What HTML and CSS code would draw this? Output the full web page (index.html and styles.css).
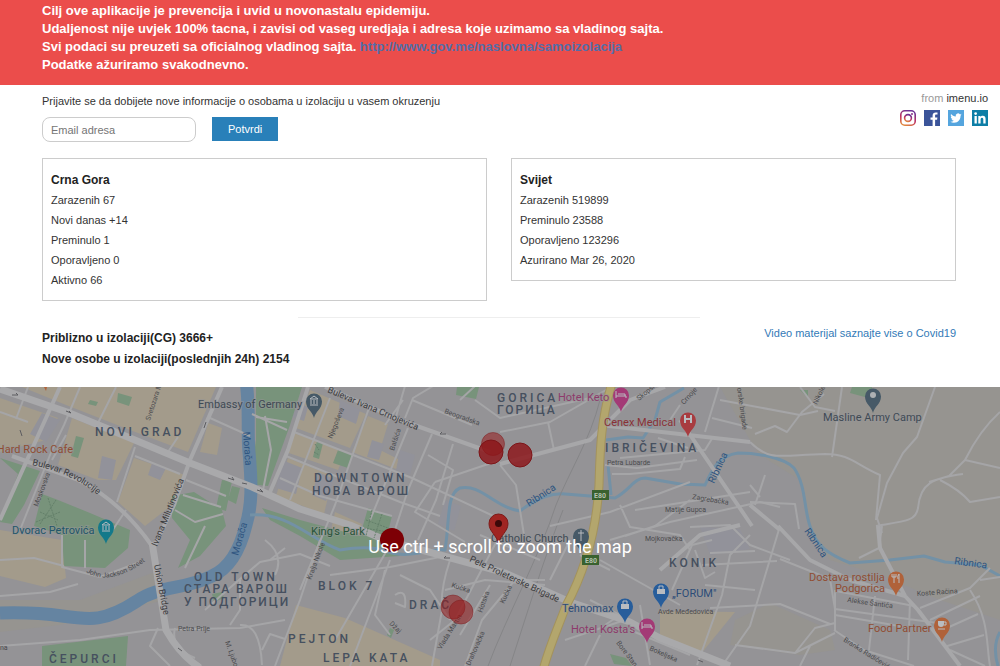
FILE: index.html
```html
<!DOCTYPE html>
<html lang="sr-Latn">
<head>
<meta charset="utf-8">
<meta name="viewport" content="width=device-width, initial-scale=1">
<title>Covid19 samoizolacija</title>
<link rel="stylesheet" href="styles.css">
</head>
<body>
<header class="banner">
  <p>Cilj ove aplikacije je prevencija i uvid u novonastalu epidemiju.</p>
  <p>Udaljenost nije uvjek 100% tacna, i zavisi od vaseg uredjaja i adresa koje uzimamo sa vladinog sajta.</p>
  <p>Svi podaci su preuzeti sa oficialnog vladinog sajta. <a href="#izvor">http://www.gov.me/naslovna/samoizolacija</a></p>
  <p>Podatke ažuriramo svakodnevno.</p>
</header>

<section class="top">
  <form class="signup">
    <label for="email">Prijavite se da dobijete nove informacije o osobama u izolaciju u vasem okruzenju</label>
    <div class="signup-row">
      <input id="email" type="email" placeholder="Email adresa">
      <button type="button">Potvrdi</button>
    </div>
  </form>
  <div class="credit">
    <p>from <a href="#imenu">imenu.io</a></p>
    <nav class="social" aria-label="Drustvene mreze">
      <a href="#instagram" aria-label="Instagram"><svg viewBox="0 0 16 16"><defs><linearGradient id="ig" x1="0.2" y1="1" x2="0.6" y2="0"><stop offset="0" stop-color="#e08a3c"/><stop offset=".45" stop-color="#c2335f"/><stop offset="1" stop-color="#6b3094"/></linearGradient></defs><g fill="none" stroke="url(#ig)" stroke-width="1.6"><rect x=".8" y=".8" width="14.4" height="14.4" rx="4"/><circle cx="8" cy="8" r="3.4"/></g><circle cx="12" cy="4" r="1" fill="#8a3087"/></svg></a>
      <a href="#facebook" aria-label="Facebook"><svg viewBox="0 0 16 16"><path fill="#3b5499" d="M0 0h16v16H0z"/><path fill="#fff" d="M8.6 16V9.8H6.5V7.4h2.1V5.6c0-2.1 1.3-3.2 3.1-3.2.9 0 1.6.1 1.8.1v2.1h-1.2c-1 0-1.2.5-1.2 1.2v1.6h2.3l-.3 2.4h-2V16z"/></svg></a>
      <a href="#twitter" aria-label="Twitter"><svg viewBox="0 0 16 16"><path fill="#55a5de" d="M0 0h16v16H0z"/><path fill="#fff" d="M13.6 4.6c-.4.2-.9.3-1.3.4.5-.3.8-.7 1-1.3-.5.3-1 .5-1.5.6A2.3 2.3 0 0 0 7.8 6.400C5.900 6.300 4.200 5.400 3.100 4c-.6 1-.3 2.400.7 3.100-.4 0-.7-.1-1-.3 0 1.100.8 2.100 1.800 2.300-.3.100-.7.100-1 0 .3.900 1.100 1.600 2.200 1.600a4.700 4.700 0 0 1-3.400 1c1 .7 2.300 1 3.600 1 4.300 0 6.700-3.600 6.500-7 .5-.3.800-.7 1.100-1.100z"/></svg></a>
      <a href="#linkedin" aria-label="LinkedIn"><svg viewBox="0 0 16 16"><path fill="#0d7ea6" d="M0 0h16v16H0z"/><path fill="#fff" d="M2.500 6h2.300v7.500H2.500zM6.300 6h2.200v1c.4-.7 1.200-1.200 2.300-1.200 2.200 0 2.800 1.400 2.800 3.400v4.300h-2.300V9.700c0-1-.1-2-1.300-2s-1.400 1-1.400 2v3.800H6.300z"/><circle cx="3.650" cy="3.600" r="1.350" fill="#fff"/></svg></a>
    </nav>
  </div>
</section>

<main class="content">
  <div class="cards">
    <section class="card">
      <h2>Crna Gora</h2>
      <p>Zarazenih 67</p>
      <p>Novi danas +14</p>
      <p>Preminulo 1</p>
      <p>Oporavljeno 0</p>
      <p>Aktivno 66</p>
    </section>
    <section class="card">
      <h2>Svijet</h2>
      <p>Zarazenih 519899</p>
      <p>Preminulo 23588</p>
      <p>Oporavljeno 123296</p>
      <p>Azurirano Mar 26, 2020</p>
    </section>
  </div>
  <hr class="rule">
  <div class="summary">
    <div class="totals">
      <p>Priblizno u izolaciji(CG) 3666+</p>
      <p>Nove osobe u izolaciji(poslednjih 24h) 2154</p>
    </div>
    <a href="#video">Video materijal saznajte vise o Covid19</a>
  </div>
</main>

<section class="map" aria-label="Mapa">
<svg class="map-canvas" viewBox="0 387 1000 279" preserveAspectRatio="xMidYMin slice">
  <defs>
    <path id="pin" d="M0 18C-1 12-8 9-8 1.500A8 8 0 0 1 8 1.500C8 9 1 12 0 18z"/>
    <path id="t-revolucije" d="M32 465Q75 474 100 497"/>
    <path id="t-jackson" d="M86 572Q110 588 150 558"/>
  </defs>
  <rect class="land" y="387" width="1000" height="279"/>

  <g class="tan">
    <path d="M720 387H1000V620L940 600 880 575 830 560 812 530 800 480 760 455 750 440z"/>
    <path d="M735 620L770 603 830 630 835 650 800 655 730 645z"/>
    <path d="M0 600L80 600 160 570 165 600 60 625 0 632z"/>
  </g>
  <g class="beige">
    <path d="M22 387H216L188 452 130 430 66 405z"/>
    <path d="M0 398L58 418 46 440 0 452z"/>
    <path d="M72 418L134 443 116 480 98 480 58 465z"/>
    <path d="M134 458L185 475 172 505 145 526 118 502z"/>
    <path d="M208 423L222 428 217 455 200 452z"/>
    <path d="M310 390L366 414 350 448 296 428z"/>
    <path d="M294 433L346 452 338 470 286 452z"/>
    <path d="M288 458L333 476 324 514 276 496z"/>
    <path d="M368 416L388 424 380 450 408 464 404 472 352 452z"/>
    <path d="M0 530L62 540 66 578 45 587 0 576z"/>
    <path d="M335 512L362 524 355 545 330 535z"/>
    <path d="M296 605L345 618 440 660 440 666H280z"/>
    <path d="M660 611L735 612 700 655 660 640z"/>
  </g>
  <g class="built">
    <path d="M102 456l14 4-4 20-14-2zM152 463l14 5-6 12-12-5zM42 413l18 7-14 22-16-8zM282 460l20 8-6 26-20-6zM318 472l16 7-8 22-14-6zM372 440l12 4-5 16-12-3zM400 450l15 5-5 20-14-5zM445 500l16 6-7 25-16-7zM296 402l12 5-4 14-12-4zM340 400l20 10-4 14-18-8zM700 527l40 2 10 20-40 6z"/>
  </g>
  <g class="green">
    <path d="M118 393l14 4-3 9-12-4zM76 436l8 2-6 20-7-2zM90 400l8 2-2 4-8-2z"/>
    <path d="M0 458L40 471 24 505 12 524 0 522 18 474z"/>
    <path d="M42 494L58 500 90 513 130 530 128 548 105 568 64 566 62 535 34 526z"/>
    <path d="M172 496L194 492 222 510 226 526 200 556 178 568 190 540 172 518z"/>
    <path d="M222 480l10 1-6 30-10-3zM232 486l8 2-4 16-8-4z"/>
    <path d="M256 387H302L290 425 268 486 250 484 256 440z"/>
    <path d="M317 441l6 2-4 16-6-2zM338 450l15 5-5 13-15-5z"/>
    <path d="M262 508L300 520 360 536 368 508 392 516 386 540 400 556 340 560 300 536 270 520z"/>
    <path d="M457 387h22l-3 12-20-4zM852 387h20v12l-22-6zM610 654l16 4 6 8-18-2zM390 628l4 2-3 8-4-3z"/>
    <path d="M42 646L128 636 126 666H42z"/>
    <path d="M212 594l10-2 2 6-10 4zM800 390h8v8z"/>
  </g>
  <g class="water-wide"><path d="M246 380C250 410 247 430 249 452C252 485 252 505 246 525C240 550 230 568 212 576C185 590 160 585 137 601C105 622 90 620 62 616Q35 612 0 613"/></g>
  <g class="stream">
    <path d="M250 515C290 512 310 540 340 550Q370 545 385 551C410 560 430 548 445 550C450 520 446 494 460 488C482 484 492 506 520 511C540 496 553 493 565 494L615 498C630 490 634 478 645 478L680 484 705 485C712 470 718 456 738 453 758 453 785 458 794 468C806 485 804 510 810 526C816 546 828 554 850 563L890 560 924 556 945 562 980 565 1000 576"/>
    <path d="M606 440l22-3 15 1 12-18 5-18 24-14M608 465l3 30"/>
    <path d="M1000 632q-8 14-2 34"/>
  </g>

  <g class="rail"><path d="M600 400C590 440 570 470 556 505C540 555 505 620 488 666M563 510C545 555 525 620 510 666"/></g>
  <g class="lane">
    <path d="M80 387L64 425 52 450 30 505 20 530M0 412l28 10M28 387l-12 32M66 435l-14 25M135 447l-18 55M135 456l45 18M178 437l-10 15M186 480l40 16M183 495l38 12M116 387l-20 40M210 418l40 18M256 417L287 422M265 416l6 34-8 40M287 430l-35-16"/>
    <path d="M294 432L412 478 502 520M286 456L400 502 440 516M280 478L320 496 392 516M330 398L290 500M369 408L335 505 300 590M408 428L370 520M432 434L408 490 390 545 335 640M453 444L436 500 418 540M405 386L395 420M412 400l60 25M403 400L385 425M428 455l25 15-10 35"/>
    <path d="M435 482L500 460M435 482l-20 30 50 30M405 418l8-20 20-12M500 465l16 20 8 50M500 432l50-10 70-40M548 422l6 28M475 400l25 18 90-20M460 400l15-14"/>
    <path d="M170 666l-20-20 8-18M0 596l50-4 28-8M64 566l-30-8-34 2M62 535v32l38 10 40-15M106 540l20-30M85 540v28M205 526l-20 42M175 510l20 12 28-8"/>
    <path d="M0 646L80 640 150 630 240 628 285 620M175 628q-5 20 20 30M240 625q20-2 22 40M205 610l20-18 35-30 40 -8 30 12M240 580v30l-10 15M265 540q20 15 10 35M285 548l-15 12M320 540l-20 60-25 66M262 650l8-16 15 5"/>
    <path d="M330 575l60-8 60-12M390 560L350 666M400 575l30 15 20 30M385 570l-10 45 15 20M395 595q12-8 10 12l-10-4M450 560q-10 30-8 50l-10 56M500 535L455 620 430 640M545 580L515 580 482 620 465 666M490 585l-30 50M445 590l40-10 60 5M540 560l-60-25"/>
    <path d="M605 465l32 3 60-8M612 474l18 0 50-5 5-12M620 458l85-8 8-13M658 438l30 10M705 432l14-46M712 418l40 10M720 400l80 15 18-4M670 420l10-15M755 434l20-8 12 6 15-20 22-18M800 387l15 20 20 4M842 387l-10 70M935 387l-18 50-14 16-16 30-10 35 5 15"/>
    <path d="M550 526l60-14 80-30M620 505l10 22 50 8 10 15M635 510l115-18M610 540l60-18 90 -20 20 5M690 500l-35 26-30 10M690 527l40-2 20 20 40 15M750 535l-20 20-8 40-25 70M672 590l20-45 20-5M695 550l10 28 10-6M710 553l45-2M702 565l75-4M705 585l50 5M780 526l-30 100-28 40"/>
    <path d="M600 560l80 45M570 540l-20 40M610 570l-30-15M590 600l30 15-15 10M625 620l-60 20M600 635l-15 31M640 605l10 60M630 630l60 25"/>
    <path d="M750 442c20 20 30 13 75 12 25 0 30 10 55 21L876 520M965 460q15-30 35-48M965 460l35 8M965 460l-16 16-20 6M876 526c30 -5 40-5 42-18 2-25 15-30 45-34M940 480q20 10 30 22l30-5M750 485l10 12M765 475l-10 30M750 502l45 2 4 25M882 526l-3 22-20 10"/>
    <path d="M780 559l50 20 5 30 110 15M836 591l78 15M835 615l70 12M834 630l30 20 50 16M835 590v40M875 596l-6 54M735 645l60 8 20-25 20-5M800 666l10-20M710 608l70-4 50 20M795 653l40-20M910 600l-2 60M920 608l50-20 20-20M930 620l50-24M938 632l40-18M944 647l40-12M950 650l35 16M970 590c20 30 16 55 20 76M980 580l20-3"/>
  </g>
  <g class="street">
    <path d="M222 387L190 460 174 505 155 545M60 387L0 520M308 387L288 450 270 492M12 456L76 479Q120 500 152 546L157 580 166 630Q180 655 200 666"/>
    <path d="M325 387L400 420 490 452M500 464L590 440 630 400 665 387M752 526L680 420M600 425L750 442M778 526L810 560 850 580 905 596 918 610 960 666M880 548L905 596M750 505L780 530M880 548L878 526M660 570L700 535 740 525"/>
  </g>
  <g class="avenue"><path d="M0 389L67 412 130 438 190 463 252 487 300 509 350 525 385 540 440 555 505 573 570 602 630 622 660 638 730 666M152 542L166 630Q180 655 200 668"/></g>
  <g class="highway-edge"><path d="M613 380C600 420 600 455 599 485 596 540 580 580 566 606 555 635 550 645 543 670"/></g>
  <g class="highway"><path d="M613 380C600 420 600 455 599 485 596 540 580 580 566 606 555 635 550 645 543 670"/></g>

  <g class="paths">
    <path d="M48 498l9 28M36 522l24-10M40 512l18 8M40 524l16-24M366 520l22 8M364 528l24 4M372 510l-6 26M382 514l-8 24M315 444l4 6M314 452l5 3"/>
    <path class="arrows" d="M12 395h6l-2-2M66 411l5 2-2-2M22 436l-2-6M204 428l2-6M228 478l6 2-2-3M242 483l5 1M257 490l6 2-3-3M446 434h-6l2-2M450 558h-6l2-2M178 648l4 3M698 660l5 2"/>
  </g>

  <g class="shield"><rect x="592" y="490" width="17" height="10"/><rect x="582" y="555" width="17" height="10"/><text x="600" y="498">E80</text><text x="591" y="563">E80</text></g>

  <g class="area">
    <text x="95" y="436">NOVI GRAD</text>
    <text x="314" y="482">DOWNTOWN</text><text class="cyr" x="312" y="495">НОВА ВАРОШ</text>
    <text x="497" y="402">GORICA</text><text class="cyr" x="497" y="414">ГОРИЦА</text>
    <text x="605" y="452">IBRIČEVINA</text>
    <text x="194" y="581">OLD TOWN</text><text class="cyr" x="184" y="593">СТАРА ВАРОШ</text><text class="cyr" x="184" y="606">У ПОДГОРИЦИ</text>
    <text x="318" y="590">BLOK 7</text><text x="409" y="609">DRAČ</text>
    <text x="288" y="643">PEJTON</text><text x="323" y="662">LEPA KATA</text>
    <text x="49" y="663">ČEPURCI</text><text x="669" y="567">KONIK</text>
  </g>
  <g class="road-name">
    <text class="big"><textPath href="#t-revolucije">Bulevar Revolucije</textPath></text>
    <text class="big" transform="translate(327 392) rotate(23)">Bulevar Ivana Crnojevića</text>
    <text class="big" transform="translate(469 561) rotate(25)">Pele Proleterske Brigade</text>
    <text class="big" transform="translate(154 565) rotate(79)">Union Bridge</text>
    <text class="big" transform="translate(157 547) rotate(-68)">Ivana Milutinovića</text>
    <text><textPath href="#t-jackson">John Jackson Street</textPath></text>
    <text transform="translate(38 507) rotate(-70)">Moskovska</text>
    <text transform="translate(150 421) rotate(-72)">Svetozara M</text>
    <text transform="translate(332 439) rotate(-68)">Njegoševa</text>
    <text transform="translate(394 451) rotate(-72)">Balšića</text>
    <text transform="translate(444 413) rotate(20)">Beogradska</text>
    <text x="607" y="465">Petra Lubarde</text><text x="665" y="512">Matije Gupca</text>
    <text transform="translate(692 499) rotate(9)">Zagrebačka</text>
    <text transform="translate(639 401) rotate(-40)">Skopska</text>
    <text transform="translate(684 405) rotate(-48)">Crnoje</text>
    <text transform="translate(737 388) rotate(82)">orske brigade</text>
    <text transform="translate(817 405) rotate(-65)">Nikole</text>
    <text x="645" y="541">Mojkovačka</text><text x="658" y="614">Avde Međedovića</text>
    <text transform="translate(311 580) rotate(-69)">Kralja Nikole</text>
    <text x="178" y="631">Petra Prlje</text><text x="0" y="650">na</text>
    <text transform="translate(225 642) rotate(70)">M. Ljubov</text>
    <text transform="translate(451 587) rotate(18)">Kučka</text><text transform="translate(482 613) rotate(-70)">Hotska</text>
    <text transform="translate(504 604) rotate(-65)">Kučka</text><text transform="translate(441 650) rotate(-58)">Vlada Martin</text>
    <text transform="translate(470 666) rotate(-66)">Drahovačka</text><text transform="translate(389 624) rotate(45)">Džaj</text>
    <text transform="translate(616 643) rotate(53)">Bore Stan</text><text transform="translate(649 650) rotate(24)">Bokeljska</text>
    <text transform="translate(847 602) rotate(8)">Alekse Šantića</text><text transform="translate(917 596) rotate(-4)">Koste Račina</text>
    <text transform="translate(843 641) rotate(32)">Branka Radičevića</text>
  </g>
  <g class="water-name">
    <text transform="translate(243 432) rotate(86)">Morača</text><text transform="translate(238 556) rotate(-74)">Morača</text>
    <text transform="translate(529 507) rotate(-33)">Ribnica</text><text transform="translate(714 484) rotate(-65)">Ribnica</text>
    <text transform="translate(804 531) rotate(56)">Ribnica</text><text transform="translate(954 564) rotate(8)">Ribnica</text>
  </g>

  <g class="place">
    <text x="198" y="408">Embassy of Germany</text>
    <text x="823" y="421">Masline Army Camp</text>
    <text class="orange end" x="73" y="453">Hard Rock Cafe</text>
    <text class="teal" x="12" y="534">Dvorac Petrovića</text>
    <text class="park" x="311" y="535">King's Park</text>
    <text class="pink" x="558" y="401">Hotel Keto</text>
    <text class="red" x="604" y="426">Cenex Medical</text>
    <text x="491" y="542">Catholic Church</text>
    <text class="blue" x="562" y="612">Tehnomax</text>
    <text class="pink" x="571" y="633">Hotel Kosta's</text>
    <text class="blue" x="672" y="597">„FORUM"</text>
    <text class="orange" x="809" y="581">Dostava rostilja</text><text class="orange" x="835" y="592">Podgorica</text>
    <text class="orange" x="868" y="632">Food Partner</text>
  </g>
  <g class="pins">
    <g transform="translate(314 400)"><use href="#pin" fill="#465967"/><path d="M-4-1L0-4 4-1zM-3 0v4M0 0v4M3 0v4M-4 5h8" /></g>
    <g transform="translate(873 395)"><use href="#pin" fill="#465967"/><circle r="3" fill="#adb0b3"/></g>
    <g transform="translate(106 526)"><use href="#pin" fill="#14798a"/><path d="M-4-1L0-4 4-1zM-3 0v4M0 0v4M3 0v4M-4 5h8"/></g>
    <g transform="translate(621 394)"><use href="#pin" fill="#a33a76"/><path d="M-5-3v7M-5 2h10v2M-3 0h7v2"/></g>
    <g transform="translate(688 419)"><use href="#pin" fill="#a83c40"/><path class="bold" d="M-3-4v8M3-4v8M-3 0h6"/></g>
    <g transform="translate(581 535)"><use href="#pin" fill="#465967"/><path d="M0-5v11M-3-2h6"/></g>
    <g transform="translate(625 605)"><use href="#pin" fill="#275d9b"/><path class="solid" d="M-4-1h8v5h-8z"/><path d="M-2-1v-3h4v3"/></g>
    <g transform="translate(661 590)"><use href="#pin" fill="#275d9b"/><path class="solid" d="M-4-1h8v5h-8z"/><path d="M-2-1v-3h4v3"/></g>
    <g transform="translate(647 625)"><use href="#pin" fill="#a33a76"/><path d="M-5-3v7M-5 2h10v2M-3 0h7v2"/></g>
    <g transform="translate(896 578)"><use href="#pin" fill="#b0623a"/><path d="M-2-4v9M-4-4v3h4v-3M3 5v-9q-2 2-1 5"/></g>
    <g transform="translate(942 624)"><use href="#pin" fill="#b0623a"/><path class="solid" d="M-4-3h6v3q0 3-3 3t-3-3z"/><path d="M2-2h2v3h-2M-4 5h7"/></g>
    <path class="solid orange-bit" d="M44 387h3l-1 4z"/>
  </g>
  <g class="cases">
    <circle cx="493" cy="444" r="11.500" class="light"/><circle cx="491" cy="452" r="12" class="mid"/>
    <circle cx="520" cy="455" r="12" class="mid"/>
    <circle cx="392" cy="540" r="12" class="full"/>
    <circle cx="453" cy="607" r="12" class="light"/><circle cx="461" cy="612" r="12" class="light"/>
  </g>
  <path class="here" d="M498.500 544C497 535 489 532 489 523.500A9.500 9.500 0 0 1 508 523.500C508 532 500 535 498.500 544z"/>
  <circle cx="498.500" cy="523.500" r="3.500" fill="#3c0909"/>
</svg>
<p class="map-hint">Use ctrl + scroll to zoom the map</p>
</section>
</body>
</html>
```
FILE: styles.css
```css
* { box-sizing: border-box; }
body {
  margin: 0;
  min-height: 100vh;
  display: flex;
  flex-direction: column;
  background: #fff;
  color: #333;
  font: 11px/20px "Liberation Sans", Arial, sans-serif;
}
p, h2 { margin: 0; }
a { color: #337ab7; text-decoration: none; }

.banner {
  padding: 2px 42px 11px;
  background: #eb4d4b;
  color: #fff;
  font-size: 13px;
  font-weight: bold;
  line-height: 18px;
}
.banner a { color: #536da8; }

.top {
  display: flex;
  justify-content: space-between;
  padding: 7px 12px 16px 42px;
}
.signup { display: flex; flex-direction: column; gap: 7px; }
.signup label { line-height: 18px; }
.signup-row { display: flex; align-items: flex-start; gap: 16px; }
.signup input {
  width: 154px;
  height: 25px;
  padding: 0 8px;
  border: 1px solid #ccc;
  border-radius: 8px;
  background: #fff;
  color: #333;
  font: inherit;
}
.signup input::placeholder { color: #757575; opacity: 1; }
.signup button {
  height: 24px;
  padding: 0 15px;
  border: 1px solid #2980b9;
  background: #2980b9;
  color: #fff;
  font: inherit;
}
.credit {
  display: flex;
  flex-direction: column;
  align-items: flex-end;
  gap: 6px;
  color: #999;
  line-height: 12px;
}
.credit p a { color: #333; }
.social { display: flex; gap: 8px; }
.social svg { display: block; width: 16px; height: 16px; }

.content { padding: 0 44px 17px 42px; }
.cards {
  display: grid;
  grid-template-columns: 1fr 1fr;
  align-items: start;
  gap: 24px;
}
.card {
  padding: 11px 8px 10px;
  border: 1px solid #ccc;
}
.card h2 { color: #222; font-size: 12px; line-height: 20px; }
.rule {
  width: 44%;
  height: 1px;
  margin: 16px auto 5px;
  border: 0;
  background: #eee;
}
.summary {
  display: flex;
  justify-content: space-between;
  align-items: flex-start;
  line-height: 21px;
}
.totals {
  padding-top: 5px;
  color: #222;
  font-size: 12px;
  font-weight: bold;
}

.map {
  position: relative;
  flex: 1;
  min-height: 279px;
  overflow: hidden;
  background: #969597;
}
.map-canvas {
  position: absolute;
  inset: 0;
  width: 100%;
  height: 100%;
  font-family: Roboto, sans-serif;
}
.map-hint {
  position: absolute;
  inset: 149px 0 auto;
  color: #fff;
  font: 18px/22px Roboto, sans-serif;
  text-align: center;
}

.land { fill: #949396; }
.tan { fill: #969490; }
.beige { fill: #a39b8b; }
.built { fill: #92929a; }
.green { fill: #78937b; }
.water-wide { fill: none; stroke: #6584a1; stroke-width: 13; }
.stream { fill: none; stroke: #7391a6; stroke-width: 3; stroke-linejoin: round; }
.rail { fill: none; stroke: #858587; stroke-width: 1; }
.lane { fill: none; stroke: #a5a5a7; stroke-width: 2; stroke-linejoin: round; }
.street { fill: none; stroke: #a7a7a9; stroke-width: 4; stroke-linejoin: round; }
.avenue { fill: none; stroke: #a9a9ab; stroke-width: 7; stroke-linejoin: round; }
.highway-edge { fill: none; stroke: #a3925d; stroke-width: 9; }
.highway { fill: none; stroke: #b3a66d; stroke-width: 7; }
.paths { fill: none; stroke: #64806a; stroke-width: 1; stroke-dasharray: 2 1; }
.arrows { stroke: #5c5c60; stroke-dasharray: none; }
.shield rect { fill: #39612f; }
.shield text { fill: #b5c2b0; font-size: 7px; font-weight: bold; text-anchor: middle; }
.area text {
  fill: #46505f;
  font-size: 12px;
  font-weight: 500;
  letter-spacing: 3px;
}
.area .cyr { letter-spacing: 2px; }
.road-name text { fill: #4b4b4e; font-size: 7px; }
.road-name .big { fill: #3a3a3d; font-size: 9px; }
.water-name text { fill: #2f5580; font-size: 10px; }
.place text {
  fill: #3f4a54;
  font-size: 11px;
  stroke: #96969880;
  stroke-width: 2px;
  paint-order: stroke;
}
.place .end { text-anchor: end; }
.place .orange { fill: #914d33; }
.place .teal { fill: #22566a; }
.place .park { fill: #28553a; }
.place .pink { fill: #8d3b6b; }
.place .red { fill: #8a3136; }
.place .blue { fill: #2c4c77; }
.pins path { fill: none; stroke: #b9bcc0; stroke-width: 1; }
.pins .bold { stroke-width: 2; }
.pins use, .pins #pin { stroke: none; }
.pins .solid { fill: #b9bcc0; stroke: none; }
.pins .orange-bit { fill: #b0623a; }
.cases .light { fill: #96191b; fill-opacity: 0.55; stroke: #7d2022; stroke-opacity: 0.5; }
.cases .mid { fill: #8c1215; fill-opacity: 0.8; stroke: #7d1518; }
.cases .full { fill: #7d0005; }
.here { fill: #a02522; stroke: #7d1816; stroke-width: 1; }
```
